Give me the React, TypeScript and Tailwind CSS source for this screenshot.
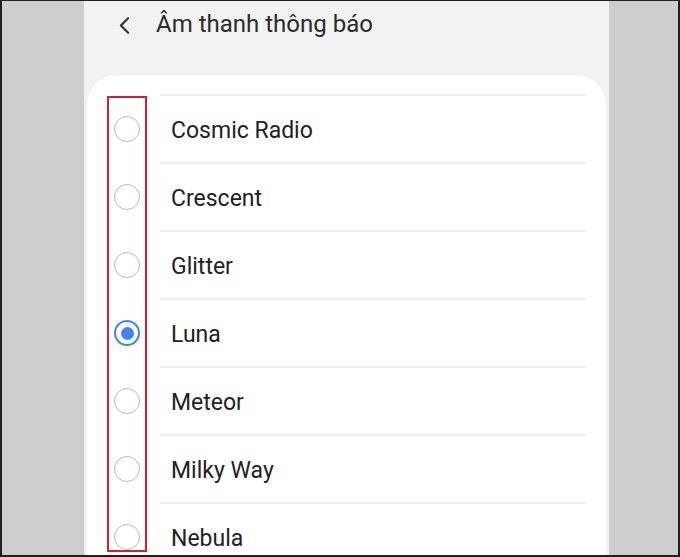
import { ChevronLeft } from "lucide-react";

const tones = ["Cosmic Radio", "Crescent", "Glitter", "Luna", "Meteor", "Milky Way", "Nebula"];
const selected = "Luna";

function Radio({ checked }: { checked: boolean }) {
  if (checked) {
    return (
      <div className="flex h-[26px] w-[26px] items-center justify-center rounded-full border-2 border-[#3d86ef]">
        <div className="h-[13px] w-[13px] rounded-full bg-[#3d86ef]" />
      </div>
    );
  }
  return <div className="h-[26px] w-[26px] rounded-full border-[1.5px] border-[#b9b9b9]" />;
}

export default function App() {
  return (
    <div
      className="flex h-[557px] w-[680px] overflow-hidden border-x-2 border-t border-b-2 border-[#1f1f1f] bg-[#cdcdcd] pl-[82px]"
      style={{ fontFamily: "Roboto, 'Noto Sans', sans-serif" }}
    >
      <div className="flex h-full w-[525px] flex-col bg-[#f2f2f2]">
        <header className="flex h-[74px] shrink-0 items-start pt-[8px]">
          <ChevronLeft className="ml-[26px] mt-[2px] h-[29px] w-[29px] text-[#333]" strokeWidth={1.8} />
          <h1 className="ml-[17px] text-[24px] leading-[30px] text-[#2b2b2b]">Âm thanh thông báo</h1>
        </header>

        <div className="relative ml-[3px] w-[519px] flex-1 rounded-t-[30px] bg-white pt-[19px]">
          {tones.map((name) => (
            <div key={name} className="flex h-[68px] items-stretch">
              <div className="flex w-[73px] items-center pl-[27px] pt-[2px]">
                <Radio checked={name === selected} />
              </div>
              <div className="mr-[19px] flex flex-1 items-center border-t-2 border-[#efefef] pl-[11px] pt-[5px] text-[23px] text-[#222]">
                {name}
              </div>
            </div>
          ))}

          {/* red highlight around the radio column */}
          <div className="absolute left-[20px] top-[21px] h-[456px] w-[40px] border-2 border-[#d4222a]" />
        </div>
      </div>
    </div>
  );
}
